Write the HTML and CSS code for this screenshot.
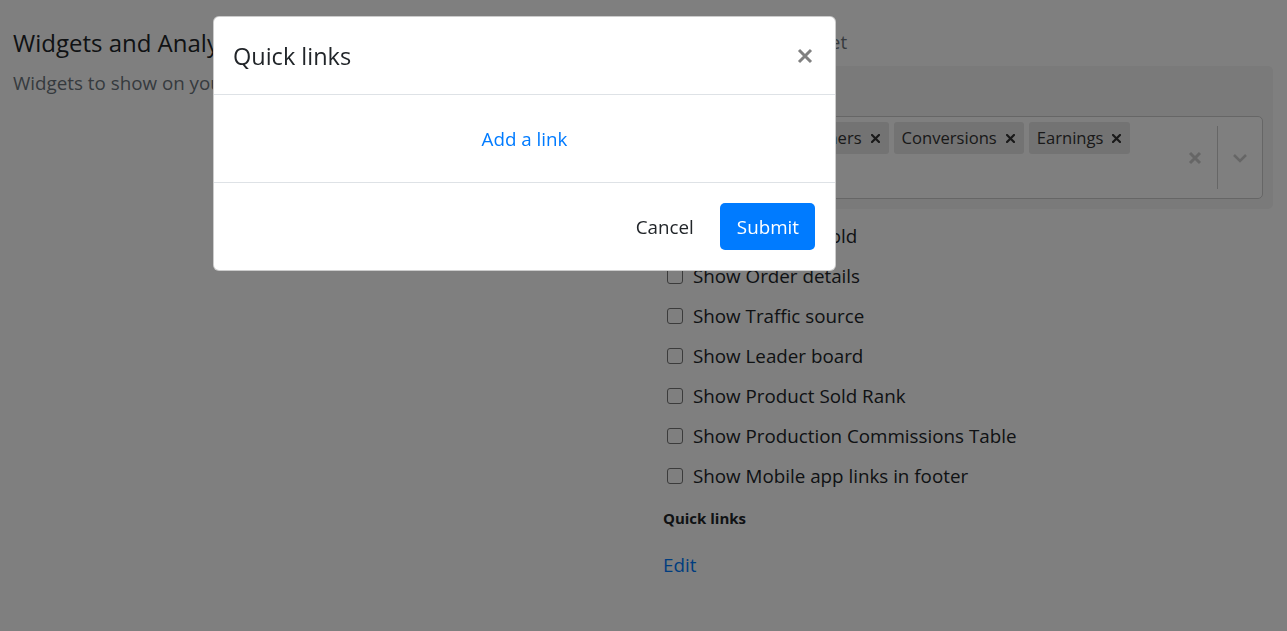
FILE: index.html
```html
<!DOCTYPE html>
<html lang="en">
<head>
<meta charset="utf-8">
<title>Widgets and Analytics</title>
<link rel="stylesheet" href="styles.css">
</head>
<body>
<div class="page">
  <section class="col-left">
    <h4 class="section-title">Widgets and Analytics</h4>
    <p class="section-sub">Widgets to show on your dashboard</p>
  </section>
  <section class="col-right">
    <div class="muted-label">Dashboard widget set</div>
    <div class="select-panel">
      <div class="panel-label">Widgets</div>
      <div class="select">
        <div class="select-values">
          <span class="tag"><span class="tag-label">Visitors</span><span class="tag-remove"><svg width="9" height="9" viewBox="0 0 9 9"><path d="M1 1L8 8M8 1L1 8" stroke="#333" stroke-width="2.2" stroke-linecap="square"/></svg></span></span>
          <span class="tag"><span class="tag-label">Customers</span><span class="tag-remove"><svg width="9" height="9" viewBox="0 0 9 9"><path d="M1 1L8 8M8 1L1 8" stroke="#333" stroke-width="2.2" stroke-linecap="square"/></svg></span></span>
          <span class="tag"><span class="tag-label">Conversions</span><span class="tag-remove"><svg width="9" height="9" viewBox="0 0 9 9"><path d="M1 1L8 8M8 1L1 8" stroke="#333" stroke-width="2.2" stroke-linecap="square"/></svg></span></span>
          <span class="tag"><span class="tag-label">Earnings</span><span class="tag-remove"><svg width="9" height="9" viewBox="0 0 9 9"><path d="M1 1L8 8M8 1L1 8" stroke="#333" stroke-width="2.2" stroke-linecap="square"/></svg></span></span>
        </div>
        <div class="select-indicators">
          <span class="ind-clear"><svg width="14" height="14" viewBox="0 0 14 14"><path d="M2 2L12 12M12 2L2 12" stroke="#ccc" stroke-width="3"/></svg></span>
          <span class="ind-sep"></span>
          <span class="ind-chevron"><svg width="16" height="10" viewBox="0 0 16 10"><path d="M2 2L8 8L14 2" stroke="#ccc" stroke-width="2.6" fill="none"/></svg></span>
        </div>
      </div>
    </div>
    <ul class="checks">
      <li class="check"><input type="checkbox" class="check-box"><span>Show Product Sold</span></li>
      <li class="check"><input type="checkbox" class="check-box"><span>Show Order details</span></li>
      <li class="check"><input type="checkbox" class="check-box"><span>Show Traffic source</span></li>
      <li class="check"><input type="checkbox" class="check-box"><span>Show Leader board</span></li>
      <li class="check"><input type="checkbox" class="check-box"><span>Show Product Sold Rank</span></li>
      <li class="check"><input type="checkbox" class="check-box"><span>Show Production Commissions Table</span></li>
      <li class="check"><input type="checkbox" class="check-box"><span>Show Mobile app links in footer</span></li>
    </ul>
    <div class="small-label">Quick links</div>
    <a class="edit-link" href="#">Edit</a>
  </section>
</div>

<div class="backdrop"></div>
<div class="modal">
  <div class="modal-header">
    <h5 class="modal-title">Quick links</h5>
    <button class="modal-close" type="button" aria-label="Close"><svg width="16" height="16" viewBox="0 0 16 16"><path d="M2 2L14 14M14 2L2 14" stroke="#808080" stroke-width="3"/></svg></button>
  </div>
  <div class="modal-body">
    <button class="btn btn-link-blue" type="button">Add a link</button>
  </div>
  <div class="modal-footer">
    <button class="btn btn-plain" type="button">Cancel</button>
    <button class="btn btn-primary" type="button">Submit</button>
  </div>
</div>
</body>
</html>
```

FILE: styles.css
```css
* { box-sizing: border-box; }

body {
  margin: 0;
  font-family: "Open Sans", "Noto Sans", sans-serif;
  font-size: 18.8px;
  color: #212529;
  background: #fff;
}

.page {
  display: grid;
  grid-template-columns: 643px 1fr;
  min-height: 631px;
}

.col-left {
  padding: 28px 0 0 13px;
}

.section-title {
  margin: 0;
  font-size: 24px;
  font-weight: 400;
  line-height: 30px;
}

.section-sub {
  margin: 10px 0 0;
  line-height: 30px;
  color: #6c757d;
}

.col-right {
  padding: 27px 24px 0 20px;
}

.muted-label {
  line-height: 30px;
  color: #6c757d;
  margin-left: -7px;
}

.select-panel {
  margin: 9px -10px 0;
  padding: 10px;
  background: #f4f4f4;
  border-radius: 5px;
}

.panel-label {
  line-height: 30px;
  margin-bottom: 10px;
}

.select {
  display: flex;
  height: 83px;
  background: #fff;
  border: 1px solid #ccc;
  border-radius: 5px;
}

.select-values {
  flex: 1;
  display: flex;
  flex-wrap: wrap;
  align-content: flex-start;
  gap: 5px;
  padding: 5px 5px 5px 9px;
}

.tag {
  display: flex;
  align-items: center;
  height: 32px;
  background: #e6e6e6;
  border-radius: 3px;
  color: #333;
  font-size: 16.6px;
}

.tag-label {
  padding: 0 4px 1px 8px;
}

.tag-remove {
  display: flex;
  align-items: center;
  padding: 0 9px 0 5px;
}

.select-indicators {
  display: flex;
  align-items: center;
}

.ind-clear {
  display: flex;
  padding: 0 15px;
}

.ind-sep {
  width: 1px;
  height: 63px;
  background: #ccc;
}

.ind-chevron {
  display: flex;
  padding: 0 14px;
}

.checks {
  list-style: none;
  margin: 7px 0 0;
  padding: 0;
}

.check {
  display: flex;
  align-items: center;
  height: 40px;
}

.check-box {
  appearance: none;
  -webkit-appearance: none;
  width: 16px;
  height: 16px;
  margin: 0 10px 0 4px;
  border: 1px solid #767676;
  border-radius: 3px;
  background: #fff;
}

.small-label {
  margin-top: 12px;
  font-size: 15px;
  font-weight: 700;
  line-height: 20px;
}

.edit-link {
  display: block;
  margin-top: 22px;
  line-height: 30px;
  color: #007bff;
  text-decoration: none;
}

.backdrop {
  position: fixed;
  inset: 0;
  background: rgba(0, 0, 0, 0.5);
}

.modal {
  position: fixed;
  left: 213px;
  top: 16px;
  width: 623px;
  background: #fff;
  border: 1px solid rgba(0, 0, 0, 0.2);
  border-radius: 6px;
}

.modal-header {
  display: flex;
  align-items: center;
  justify-content: space-between;
  height: 78px;
  padding: 2px 20px 0 19px;
  border-bottom: 1px solid #dee2e6;
}

.modal-title {
  margin: 0;
  font-size: 23.5px;
  font-weight: 400;
  line-height: 37px;
}

.modal-close {
  display: flex;
  padding: 0;
  margin: -2px 2px 0 0;
  border: 0;
  background: none;
}

.modal-body {
  display: flex;
  justify-content: center;
  padding: 20px;
  border-bottom: 1px solid #dee2e6;
}

.modal-footer {
  display: flex;
  justify-content: flex-end;
  align-items: center;
  gap: 10px;
  padding: 20px;
}

.btn {
  height: 47px;
  padding: 0 16px;
  font-family: inherit;
  font-size: 18.8px;
  border: 0;
  border-radius: 5px;
  background: none;
}

.btn-link-blue {
  color: #007bff;
}

.btn-plain {
  color: #212529;
}

.btn-primary {
  background: #007bff;
  color: #fff;
  padding: 0 16px 0 17px;
}
```
